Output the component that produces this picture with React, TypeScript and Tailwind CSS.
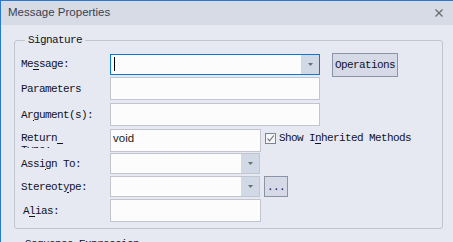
import React from "react";

const mono =
  "font-['Liberation_Mono',monospace] text-[11px] tracking-[-0.6px] text-[#101326] leading-[12px] whitespace-pre";

function U({ c }: { c: string }) {
  return <span className="underline decoration-1 underline-offset-[2px]">{c}</span>;
}

function Arrow() {
  return (
    <svg width="5" height="3" viewBox="0 0 5 3" className="block">
      <polygon points="0,0 5,0 2.5,3" fill="#6e6e6e" />
    </svg>
  );
}

function Combo({ w, focused, cursor }: { w: string; focused?: boolean; cursor?: boolean }) {
  return (
    <div
      className={
        "flex h-[21px] border bg-[#fcfcfd] " +
        w +
        (focused ? " border-[#0a78d4]" : " border-[#c2c5cd]")
      }
    >
      <div className="flex-1 relative">
        {cursor && <div className="absolute left-[3px] top-[2px] w-px h-[14px] bg-black" />}
      </div>
      <div className="w-[18px] h-full flex items-center justify-center bg-[#d1d8e6]">
        <Arrow />
      </div>
    </div>
  );
}

function Box({ w, children }: { w: string; children?: React.ReactNode }) {
  return (
    <div
      className={
        "h-[23px] border border-[#c2c5cd] bg-[#fcfcfd] flex items-center pl-[2px] " + w
      }
    >
      {children}
    </div>
  );
}

function Label({ children, extra }: { children: React.ReactNode; extra?: string }) {
  return <div className={"w-[89px] shrink-0 " + mono + (extra ? " " + extra : "")}>{children}</div>;
}

export default function App() {
  return (
    <div className="w-[453px] h-[242px] overflow-hidden bg-[#e6e9f2] border-l border-t border-[#2a78d2] flex flex-col">
      <div className="h-[24px] shrink-0 bg-[#d6dbe6] flex items-center justify-between pl-[7px] pr-[10px]">
        <span className="font-['Liberation_Sans',sans-serif] text-[11.5px] text-[#3a3f52]">
          Message Properties
        </span>
        <svg width="8" height="8" viewBox="0 0 8 8" className="block">
          <path d="M0.5 0.5 L7.5 7.5 M7.5 0.5 L0.5 7.5" stroke="#6b6b6b" strokeWidth="1.3" />
        </svg>
      </div>
      <div className="pl-[13px] flex flex-col">
        <fieldset className="mt-[8px] w-[429px] border border-[#c1c5ce] rounded-[3px] pl-[6px] pt-[5px] pb-[6px]">
          <legend className={"ml-[4px] px-[3px] " + mono + " leading-[15px]"}>Signature</legend>
          {/* Message */}
          <div className="flex h-[24px] items-start">
            <Label extra="mt-[5px]">
              Me<U c="s" />sage:
            </Label>
            <div className="mt-[1px]">
              <Combo w="w-[210px]" focused cursor />
            </div>
            <button
              className={
                "ml-[12px] w-[66px] h-[24px] border border-[#8b94a6] bg-[#d5dae6] flex items-center justify-center " +
                mono
              }
            >
              Operations
            </button>
          </div>
          {/* Parameters */}
          <div className="flex items-center">
            <Label>Parameters</Label>
            <Box w="w-[210px]" />
          </div>
          {/* Arguments */}
          <div className="flex items-center mt-[3px]">
            <Label>
              Ar<U c="g" />ument(s):
            </Label>
            <Box w="w-[210px]" />
          </div>
          {/* Return */}
          <div className="flex items-start mt-[3px] h-[23px]">
            <Label extra="mt-[3px] h-[16px] overflow-hidden">
              Return<U c=" " />
              {"\n"}Type:
            </Label>
            <Box w="w-[151px]">
              <span className="font-['Liberation_Sans',sans-serif] text-[11.5px] text-[#1b1b1b] -mt-[3px]">
                void
              </span>
            </Box>
            <div className="ml-[4px] mt-[3px] flex items-center">
              <div className="w-[11px] h-[11px] border border-[#7d8594] bg-[#f4f5f8] flex items-center justify-center">
                <svg width="9" height="9" viewBox="0 0 9 9" className="block">
                  <path d="M1.5 4.5 L3.5 6.8 L7.8 1.5" stroke="#6f6f6f" strokeWidth="1.1" fill="none" />
                </svg>
              </div>
              <span className={"ml-[3px] " + mono}>
                Show I<U c="n" />herited Methods
              </span>
            </div>
          </div>
          {/* Assign To */}
          <div className="flex items-center mt-[1px]">
            <Label>
              Assi<U c="g" />n To:
            </Label>
            <Combo w="w-[150px]" />
          </div>
          {/* Stereotype */}
          <div className="flex items-center mt-[2px]">
            <Label>
              Stereot<U c="y" />pe:
            </Label>
            <Combo w="w-[150px]" />
            <button
              className={
                "ml-[4px] w-[24px] h-[21px] border border-[#8b94a6] bg-[#d5dae6] flex items-center justify-center " +
                mono
              }
            >
              ...
            </button>
          </div>
          {/* Alias */}
          <div className="flex items-center mt-[2px]">
            <Label extra="pl-[2px]">
              A<U c="l" />ias:
            </Label>
            <Box w="w-[151px]" />
          </div>
        </fieldset>
        <div className={"mt-[9px] ml-[11px] " + mono}>Sequence Expression</div>
      </div>
    </div>
  );
}
